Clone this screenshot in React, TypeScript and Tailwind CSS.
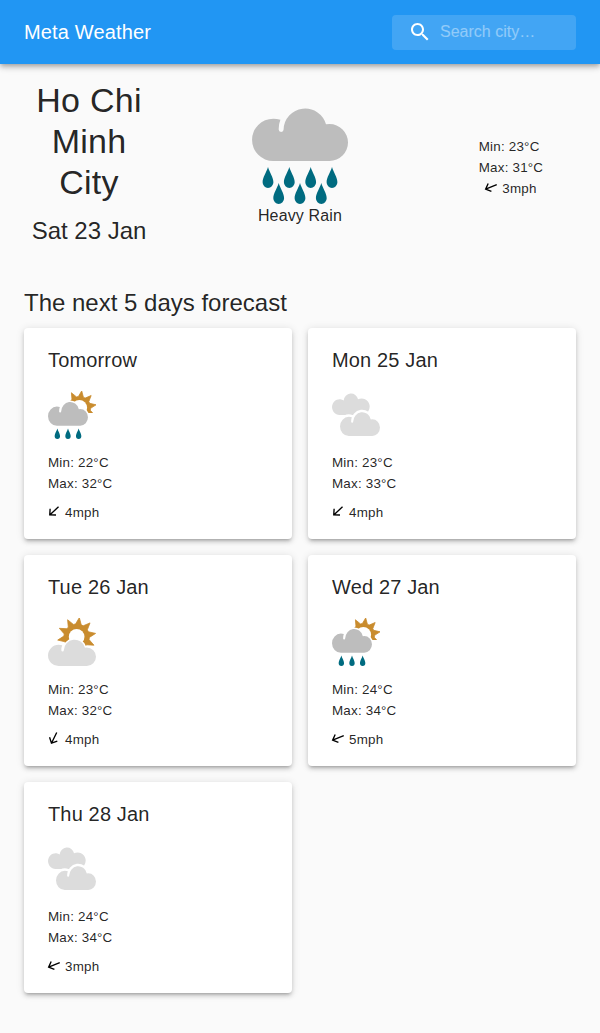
import React from "react";

type Condition = "heavy-rain" | "showers" | "heavy-cloud" | "light-cloud";

interface Forecast {
  day: string;
  condition: Condition;
  min: number;
  max: number;
  wind: number;
  bearing: number;
}

const days: Forecast[] = [
  { day: "Tomorrow", condition: "showers", min: 22, max: 32, wind: 4, bearing: 227 },
  { day: "Mon 25 Jan", condition: "heavy-cloud", min: 23, max: 33, wind: 4, bearing: 227 },
  { day: "Tue 26 Jan", condition: "light-cloud", min: 23, max: 32, wind: 4, bearing: 206 },
  { day: "Wed 27 Jan", condition: "showers", min: 24, max: 34, wind: 5, bearing: 248 },
  { day: "Thu 28 Jan", condition: "heavy-cloud", min: 24, max: 34, wind: 3, bearing: 248 },
];

const CLOUD =
  "M21.2 53A21.15 21.15 0 0 1 21.2 10.7Q25 10.7 28.4 11.7Q26.6 16 26.7 21.5A2.4 2.4 0 0 0 31.6 21.5A21.6 21.6 0 0 1 74 16.3Q75.5 16 77.5 16A18.5 18.5 0 0 1 77.5 53Z";
const PLAIN_CLOUD =
  "M20 53A19.5 19.5 0 1 1 30 17A18.8 18.8 0 0 1 67 14.5A20.4 20.4 0 1 1 76 53Z";

function Drop({ x, y }: { x: number; y: number }) {
  return (
    <path
      transform={`translate(${x} ${y})`}
      d="M0 0C1.4 5 5.4 10.3 5.4 15.2A5.4 5.8 0 0 1 -5.4 15.2C-5.4 10.3 -1.4 5 0 0Z"
      fill="#006b80"
    />
  );
}

function Sun({ cx, cy, tip, valley, inner }: { cx: number; cy: number; tip: number; valley: number; inner: number }) {
  const points = Array.from({ length: 10 }, (_, i) => {
    const at = (deg: number, r: number) => {
      const a = (deg * Math.PI) / 180;
      return `${(cx + r * Math.cos(a)).toFixed(2)},${(cy + r * Math.sin(a)).toFixed(2)}`;
    };
    const base = -82 + i * 36;
    return `${at(base - 13, valley)} ${at(base, tip)} ${at(base + 13, valley)}`;
  }).join(" ");
  return (
    <>
      <polygon points={points} fill="#c98c2e" stroke="#c98c2e" strokeWidth="1.6" strokeLinejoin="round" />
      <circle cx={cx} cy={cy} r={inner} fill="#fff" />
    </>
  );
}

function WeatherIcon({ condition, className }: { condition: Condition; className: string }) {
  return (
    <svg viewBox="0 0 96 96" className={className}>
      {condition === "heavy-rain" && (
        <>
          <path d={CLOUD} fill="#bdbdbd" />
          {[16, 37.3, 58.7, 80].map((x) => (
            <Drop key={x} x={x} y={59} />
          ))}
          {[26.7, 48, 69.3].map((x) => (
            <Drop key={x} x={x} y={75} />
          ))}
        </>
      )}
      {condition === "showers" && (
        <>
          <clipPath id="sun-corner">
            <path d="M45 0H96V44H45Z" />
          </clipPath>
          <g clipPath="url(#sun-corner)">
            <Sun cx={62.7} cy={33.5} tip={34} valley={22.5} inner={15.5} />
          </g>
          <g transform="translate(0 21.5) scale(.833 .905)">
            <path d={CLOUD} fill="#fff" stroke="#fff" strokeWidth="7" />
            <path d={CLOUD} fill="#bdbdbd" />
          </g>
          {[18.7, 40, 61.3].map((x) => (
            <Drop key={x} x={x} y={75} />
          ))}
        </>
      )}
      {condition === "heavy-cloud" && (
        <>
          <path d={PLAIN_CLOUD} transform="translate(0 5) scale(.778 .81)" fill="#dcdcdc" />
          <g transform="translate(16 42) scale(.833 .905)">
            <path d={CLOUD} fill="#fff" stroke="#fff" strokeWidth="11" />
            <path d={CLOUD} fill="#dcdcdc" />
          </g>
        </>
      )}
      {condition === "light-cloud" && (
        <>
          <Sun cx={57.3} cy={37.5} tip={38.5} valley={25.5} inner={15.7} />
          <g transform="translate(0 43)">
            <path d={CLOUD} fill="#fff" stroke="#fff" strokeWidth="6" />
            <path d={CLOUD} fill="#dcdcdc" />
          </g>
        </>
      )}
    </svg>
  );
}

function WindArrow({ bearing }: { bearing: number }) {
  return (
    <svg viewBox="0 0 12 12" className="mt-[3px] size-3 shrink-0 overflow-visible">
      <g transform={`rotate(${bearing} 6 6)`} fill="none" stroke="#000" strokeWidth="1.35">
        <path d="M6 12.2V.2M1.7 4.7L6 .2L10.3 4.7" />
      </g>
    </svg>
  );
}

function Wind({ speed, bearing }: { speed: number; bearing: number }) {
  return (
    <div className="flex gap-[5px]">
      <WindArrow bearing={bearing} />
      <span>{speed}mph</span>
    </div>
  );
}

function DayCard({ forecast }: { forecast: Forecast }) {
  return (
    <article className="h-[211px] rounded bg-white px-6 py-4 shadow-[0_3px_3px_-2px_rgba(0,0,0,0.2),0_3px_4px_0_rgba(0,0,0,0.14),0_1px_8px_0_rgba(0,0,0,0.12)]">
      <h3 className="text-xl leading-8 tracking-[0.0075em]">{forecast.day}</h3>
      <WeatherIcon condition={forecast.condition} className="mt-[15px] size-12" />
      <div className="mt-[13px] text-[13.4px] leading-[21px] tracking-[0.2px]">
        <p>Min: {forecast.min}°C</p>
        <p className="mb-2">Max: {forecast.max}°C</p>
        <Wind speed={forecast.wind} bearing={forecast.bearing} />
      </div>
    </article>
  );
}

export default function App() {
  return (
    <div className="min-h-[1033px] bg-[#fafafa] font-['Liberation_Sans',Arial,sans-serif] text-black/87">
      <header className="relative flex h-16 items-center justify-between bg-[#2196f3] px-6 text-white shadow-[0_2px_4px_-1px_rgba(0,0,0,0.2),0_4px_5px_0_rgba(0,0,0,0.14),0_1px_10px_0_rgba(0,0,0,0.12)]">
        <h1 className="text-xl leading-8 tracking-[0.0075em]">Meta Weather</h1>
        <label className="mt-px flex h-[35px] w-[184px] items-center rounded bg-white/15 pl-4">
          <svg viewBox="0 0 24 24" className="-mt-px size-6 shrink-0" fill="currentColor">
            <path d="M15.5 14h-.79l-.28-.27C15.41 12.59 16 11.11 16 9.5 16 5.91 13.09 3 9.5 3S3 5.91 3 9.5 5.91 16 9.5 16c1.61 0 3.09-.59 4.23-1.57l.27.28v.79l5 4.99L20.49 19l-4.99-5zm-6 0C7.01 14 5 11.99 5 9.5S7.01 5 9.5 5 14 7.01 14 9.5 11.99 14 9.5 14z" />
          </svg>
          <input
            type="text"
            placeholder="Search city…"
            className="-mt-[3px] ml-2 w-[120px] bg-transparent text-base leading-[19px] outline-none placeholder:text-white/42"
          />
        </label>
      </header>
      <main className="px-6 pt-4">
        <section className="flex h-[207px] items-start justify-between text-center">
          <div className="w-[130px]">
            <h2 className="text-[34px] leading-[41px] tracking-[0.00735em]">Ho Chi Minh City</h2>
            <p className="mt-3 text-2xl leading-8">Sat 23 Jan</p>
          </div>
          <div className="mt-7 flex w-[130px] flex-col items-center">
            <WeatherIcon condition="heavy-rain" className="size-24" />
            <p className="text-base leading-6 tracking-[0.00938em]">Heavy Rain</p>
          </div>
          <div className="mt-14 flex w-[130px] flex-col items-center text-[13.4px] leading-[21px] tracking-[0.2px]">
            <div className="text-left">
              <p>Min: 23°C</p>
              <p>Max: 31°C</p>
            </div>
            <Wind speed={3} bearing={248} />
          </div>
        </section>
        <h2 className="text-2xl leading-8">The next 5 days forecast</h2>
        <section className="mt-[9px] grid grid-cols-2 gap-4">
          {days.map((forecast) => (
            <DayCard key={forecast.day} forecast={forecast} />
          ))}
        </section>
      </main>
    </div>
  );
}
